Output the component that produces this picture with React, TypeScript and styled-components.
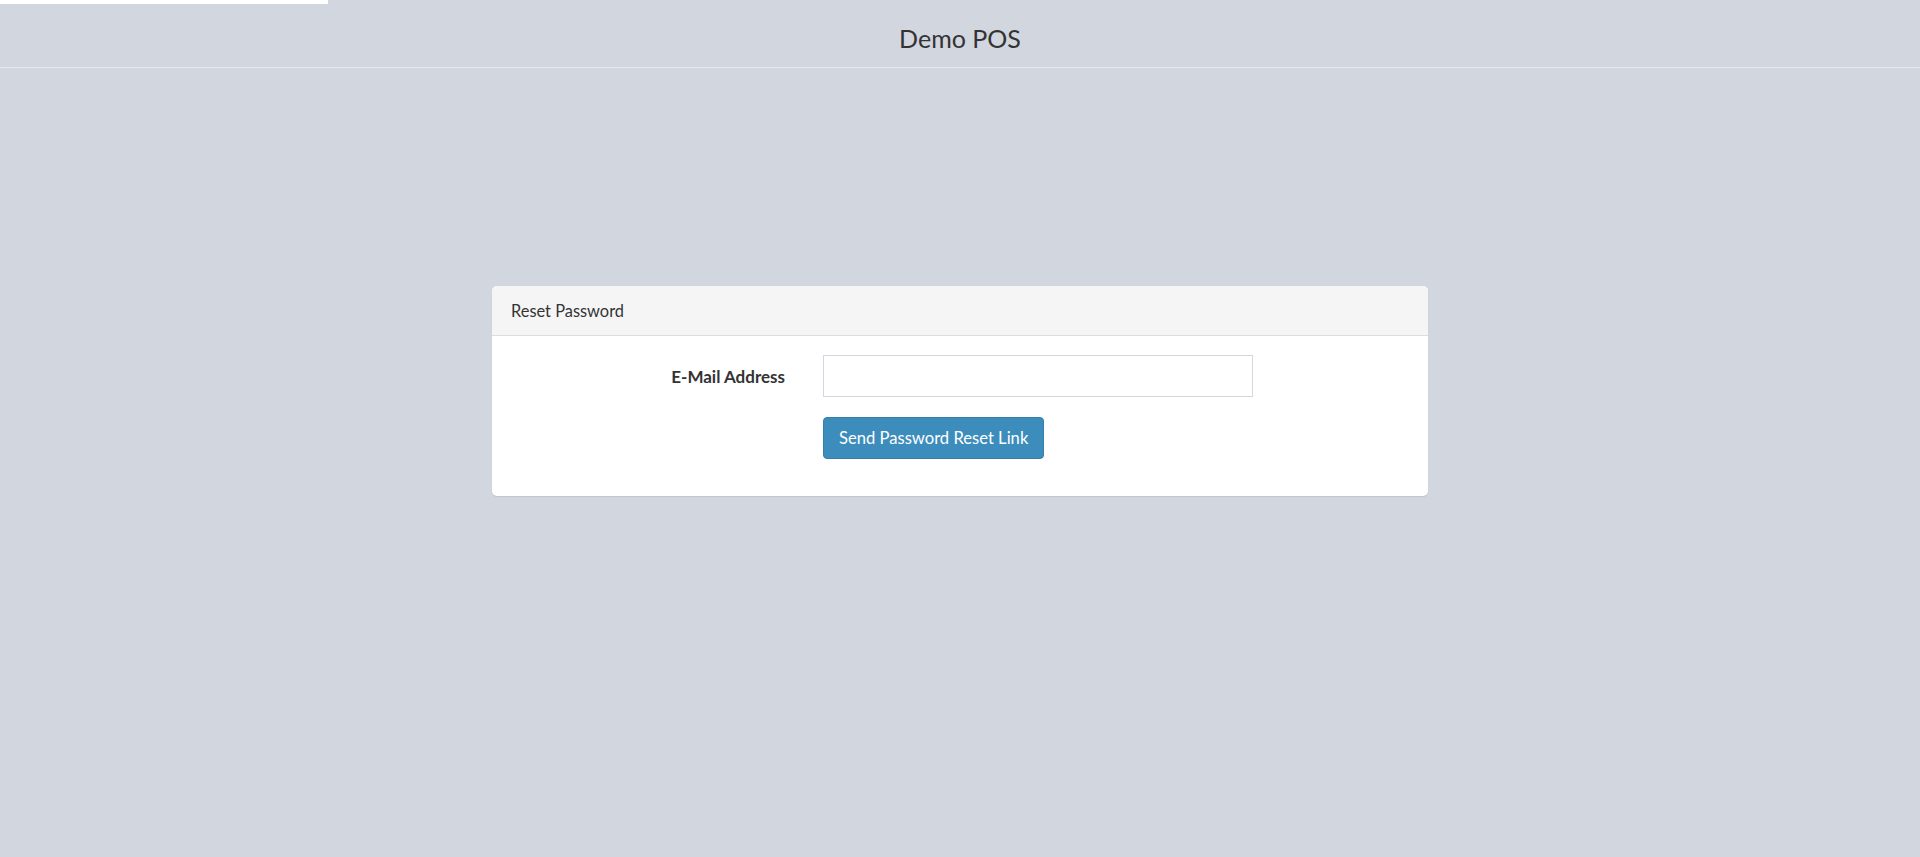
import React from "react";
import styled, { createGlobalStyle } from "styled-components";

const GlobalStyle = createGlobalStyle`
  html, body {
    margin: 0;
    padding: 0;
    background: #d2d6de;
    font-family: "Source Sans Pro", Lato, "Noto Sans", sans-serif;
    color: #333;
  }
  * { box-sizing: border-box; }
`;

const Page = styled.div`
  position: relative;
  min-height: 857px;
  background: #d2d6de;
`;

const ProgressBar = styled.div`
  position: absolute;
  top: 0;
  left: 0;
  height: 4px;
  background: #ffffff;
`;

const Header = styled.header`
  height: 68px;
  display: flex;
  align-items: center;
  justify-content: center;
  border-bottom: 1px solid #e6e8ee;
  padding-top: 10px;
`;

const Brand = styled.h1`
  margin: 0;
  font-weight: 400;
  font-size: 25px;
  color: #333;
  line-height: 1;
`;

const Main = styled.main`
  display: flex;
  justify-content: center;
  padding-top: 218px;
`;

const Panel = styled.section`
  width: 936px;
  background: #fff;
  border-radius: 5px;
  box-shadow: 0 1px 1px rgba(0, 0, 0, 0.08);
  overflow: hidden;
`;

const PanelHeading = styled.div`
  height: 50px;
  display: flex;
  align-items: center;
  padding: 0 19px;
  background: #f5f5f5;
  border-bottom: 1px solid #ddd;
  font-size: 16.4px;
  color: #333;
`;

const PanelBody = styled.div`
  padding: 19px 0 17px;
`;

const FormRow = styled.div`
  display: grid;
  grid-template-columns: 312px 468px;
  margin-bottom: 20px;
  align-items: center;
`;

const Label = styled.label`
  padding: 0 19px;
  text-align: right;
  font-weight: 700;
  font-size: 17px;
  color: #333;
`;

const Field = styled.div`
  padding: 0 19px;
`;

const Input = styled.input`
  width: 100%;
  height: 42px;
  border: 1px solid #d2d6de;
  background: #fff;
  font: inherit;
  font-size: 16.5px;
  padding: 0 15px;
  outline: none;
`;

const Button = styled.button`
  height: 42px;
  padding: 0 15px;
  background: #3c8dbc;
  border: 1px solid #367fa9;
  border-radius: 4px;
  color: #fff;
  font-family: inherit;
  font-size: 16.6px;
  cursor: pointer;
`;

export default function App() {
  return (
    <Page>
      <GlobalStyle />
      <ProgressBar style={{ width: 328 }} />
      <Header>
        <Brand>Demo POS</Brand>
      </Header>
      <Main>
        <Panel>
          <PanelHeading>Reset Password</PanelHeading>
          <PanelBody>
            <FormRow>
              <Label htmlFor="email">E-Mail Address</Label>
              <Field>
                <Input id="email" type="email" name="email" />
              </Field>
            </FormRow>
            <FormRow>
              <span />
              <Field>
                <Button type="submit">Send Password Reset Link</Button>
              </Field>
            </FormRow>
          </PanelBody>
        </Panel>
      </Main>
    </Page>
  );
}
